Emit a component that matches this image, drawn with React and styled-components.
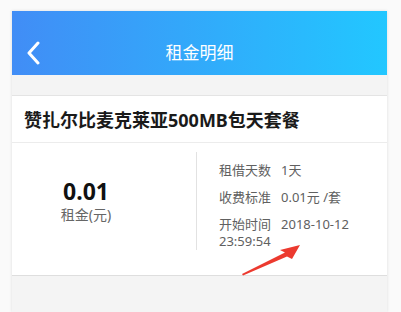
import React from 'react';
import styled, { createGlobalStyle } from 'styled-components';

const GlobalStyle = createGlobalStyle`
  html, body {
    margin: 0;
    padding: 0;
    background: #fafafa;
    font-family: "Noto Sans", "Noto Sans CJK SC", sans-serif;
  }
`;

const Page = styled.div`
  padding: 11px 0 0 12px;
  height: 312px;
  box-sizing: border-box;
  overflow: hidden;
`;

const Phone = styled.div`
  position: relative;
  width: 375px;
  height: 301px;
  background: #f4f4f4;
  box-shadow: 0 0 3px rgba(0, 0, 0, 0.12);
`;

const Header = styled.header`
  height: 64px;
  box-sizing: border-box;
  padding-top: 20px;
  display: flex;
  align-items: center;
  background: linear-gradient(90deg, #418df6 0%, #22c7ff 100%);
  position: relative;
`;

const Back = styled.button`
  position: absolute;
  left: 6px;
  top: 20px;
  height: 44px;
  width: 30px;
  border: 0;
  padding: 0;
  background: none;
  display: flex;
  align-items: center;
  justify-content: center;
`;

const Title = styled.h1`
  flex: 1;
  margin: 0;
  text-align: center;
  color: #fff;
  font-size: 17px;
  font-weight: 400;
  line-height: 44px;
`;

const Spacer = styled.div`
  height: 20px;
  border-bottom: 1px solid #e4e4e4;
`;

const Card = styled.section`
  background: #fff;
  border-bottom: 1px solid #dedede;
`;

const CardTitle = styled.div`
  height: 46px;
  padding: 0 12px;
  display: flex;
  align-items: center;
  font-size: 18px;
  font-weight: 700;
  color: #1a1a1a;
  border-bottom: 1px solid #ececec;
`;

const Body = styled.div`
  display: flex;
  align-items: stretch;
  padding: 9px 0 25px;
`;

const Amount = styled.div`
  width: 148px;
  display: flex;
  flex-direction: column;
  align-items: center;
  justify-content: center;
  margin-right: 36px;
`;

const Money = styled.div`
  font-size: 23px;
  font-weight: 700;
  color: #111;
  line-height: 28px;
`;

const MoneyLabel = styled.div`
  font-size: 14px;
  color: #666;
  line-height: 20px;
`;

const Details = styled.div`
  flex: 1;
  border-left: 1px solid #e2e2e2;
  padding: 10px 8px 0 22px;
`;

const Row = styled.div`
  font-size: 13px;
  line-height: 17px;
  color: #606060;
  & + & {
    margin-top: 10px;
  }
`;

const Label = styled.span`
  margin-right: 10px;
`;

const Arrow = styled.svg`
  position: absolute;
  left: 224px;
  top: 229px;
`;

const rows = [
  ['租借天数', '1天'],
  ['收费标准', '0.01元 /套'],
  ['开始时间', '2018-10-12 23:59:54'],
];

export default function App() {
  return (
    <>
      <GlobalStyle />
      <Page>
        <Phone>
          <Header>
            <Back aria-label="返回">
              <svg width="14" height="24" viewBox="0 0 14 24">
                <path d="M12 2 L3 12 L12 22" fill="none" stroke="#fff" strokeWidth="3" strokeLinecap="round" strokeLinejoin="round" />
              </svg>
            </Back>
            <Title>租金明细</Title>
          </Header>
          <Spacer />
          <Card>
            <CardTitle>赞扎尔比麦克莱亚500MB包天套餐</CardTitle>
            <Body>
              <Amount>
                <Money>0.01</Money>
                <MoneyLabel>租金(元)</MoneyLabel>
              </Amount>
              <Details>
                {rows.map(([k, v]) => (
                  <Row key={k}>
                    <Label>{k}</Label>
                    {v}
                  </Row>
                ))}
              </Details>
            </Body>
          </Card>
          <Arrow width="70" height="40" viewBox="0 0 70 40">
            <path d="M6 34 L49 12.5 L44 10 L64 5 L56 19 L51 16.5 L7 35.5 Z" fill="#ec3a2f" />
          </Arrow>
        </Phone>
      </Page>
    </>
  );
}
